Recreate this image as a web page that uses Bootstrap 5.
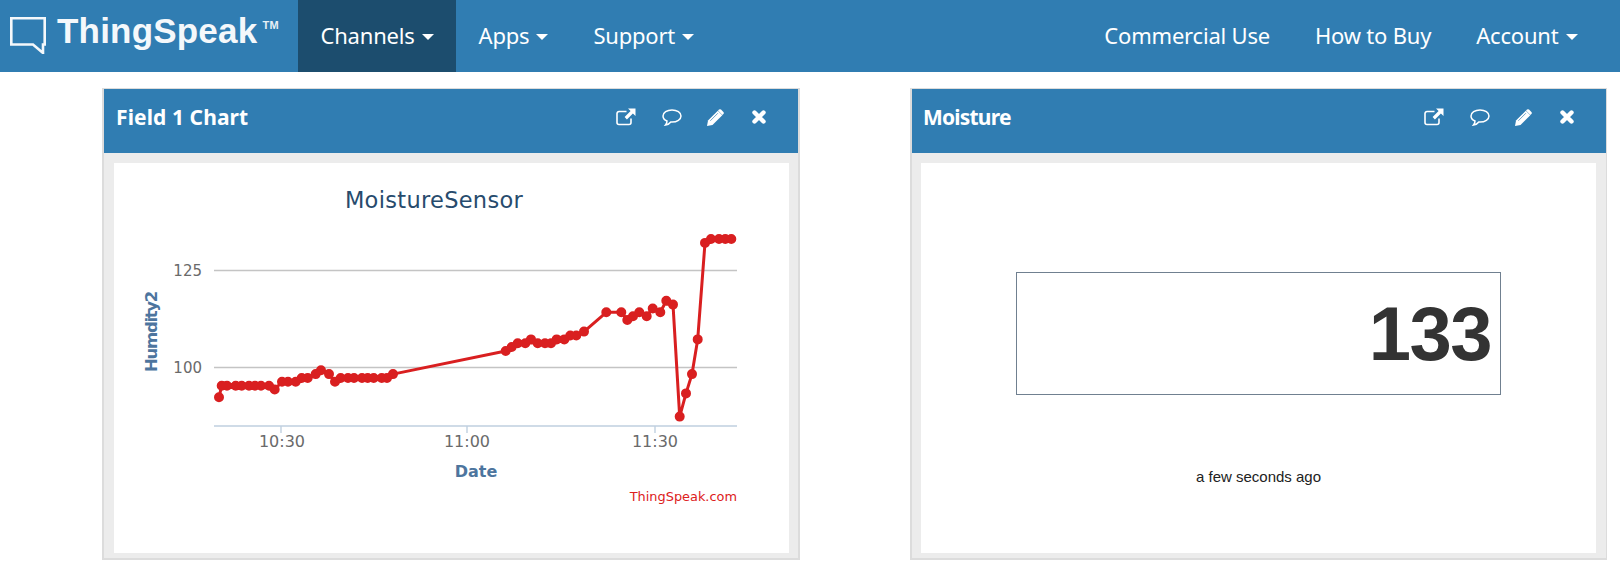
<!DOCTYPE html>
<html lang="en">
<head>
<meta charset="utf-8">
<title>ThingSpeak</title>
<link href="https://cdn.jsdelivr.net/npm/bootstrap@5.3.0/dist/css/bootstrap.min.css" rel="stylesheet">
<style>
body{background:#fff;overflow:hidden}
.ts-bar{background:#307db2;height:72px;padding:0 20px 0 0;align-items:stretch;flex-wrap:nowrap;justify-content:flex-start}
.ts-brand{display:flex;align-items:flex-start;width:298px;color:#fff;margin:0;padding:0;text-decoration:none}
.ts-brand svg{margin:17px 0 0 10px;flex:none}
.ts-word{font:700 35px/1 "Liberation Sans",Arial,sans-serif;letter-spacing:.2px;margin:13px 0 0 10px;color:#f4f8fb}
.ts-tm{font:700 11px/1 "Liberation Sans",Arial,sans-serif;margin:20px 0 0 5px;letter-spacing:.5px;color:#e8f0f6}
.ts-nav{flex-direction:row;height:72px}
.ts-nav .nav-link{color:#fff;font:400 22px/1 "Noto Sans",sans-serif;height:72px;padding:0 22.500px 2px;display:flex;align-items:center;letter-spacing:-.2px}
.ts-nav .nav-link.active{background:#1c4d6e;color:#fff}
.ts-nav .dropdown-toggle::after{border-top:6px solid;border-left:6.200px solid transparent;border-right:6.200px solid transparent;border-bottom:0;margin:4px 0 0 7px;vertical-align:0}
.ts-board{display:grid;grid-template-columns:698px 697px;column-gap:110px;padding:16px 0 0 102px}
.ts-panel{border:2px solid #dcdcdc;border-top-width:1px;border-radius:0;background:#ececec;height:472px}
.ts-panel.ts-narrow{border-right-width:1px}
.ts-head{background:#307db2;border:0;border-radius:0!important;height:64px;display:flex;align-items:center;justify-content:space-between;padding:0 13px 8px 12px;color:#fff}
.ts-head h2{font:700 21px/1 "Noto Sans",sans-serif;margin:0;letter-spacing:.1px}
.ts-narrow .ts-head{padding-left:11px}
.ts-narrow .ts-head h2{letter-spacing:-.8px}
.ts-tools{display:flex;align-items:center;width:169px;height:20px}
.ts-tools svg{flex:none;display:block}
.ts-tool1{margin-right:26px}.ts-tool2{margin-right:25px}.ts-tool3{margin-right:28px}
.ts-sheet{background:#fff;width:675px;height:390px;margin:10px 0 0 10px}
.ts-narrow .ts-sheet{margin-left:9px}
.ts-sheet svg{display:block}
.ts-box{width:485px;height:123px;border:1px solid #708090;margin:109px 0 0 95px;display:flex;align-items:center;justify-content:flex-end;padding:0 9px 0 0;color:#333;font:700 76px/1 "Liberation Sans",Arial,sans-serif;letter-spacing:-1.500px}
.ts-when{font:400 15px/1 "Liberation Sans",Arial,sans-serif;color:#222;text-align:center;margin:74px 0 0 0}
.ts-title{font:22.500px "DejaVu Sans",sans-serif;fill:#274b6d;letter-spacing:.3px}
.ts-lab{font:15px "DejaVu Sans",sans-serif;fill:#6a6a6a}
.ts-lab-x{font-size:16px}
.ts-axt{font:700 16px "DejaVu Sans",sans-serif;fill:#4d759e}
.ts-axt-y{font-size:16.500px;letter-spacing:-1.300px}
.ts-cred{font:12.900px "DejaVu Sans",sans-serif;fill:#dd2020}
</style>
</head>
<body>
<nav class="navbar ts-bar">
  <a class="ts-brand" href="#">
    <svg width="37" height="37" viewBox="0 0 37 37" fill="none" stroke="#f4f8fb" stroke-width="2.6"><path d="M1.300 1.300H34.700V27.500H33V36L23 27.500H1.300Z"/></svg>
    <span class="ts-word">ThingSpeak</span><span class="ts-tm">TM</span>
  </a>
  <ul class="navbar-nav ts-nav me-auto">
    <li class="nav-item"><a class="nav-link dropdown-toggle active" href="#">Channels</a></li>
    <li class="nav-item"><a class="nav-link dropdown-toggle" href="#">Apps</a></li>
    <li class="nav-item"><a class="nav-link dropdown-toggle" href="#">Support</a></li>
  </ul>
  <ul class="navbar-nav ts-nav">
    <li class="nav-item"><a class="nav-link" href="#">Commercial Use</a></li>
    <li class="nav-item"><a class="nav-link" href="#">How to Buy</a></li>
    <li class="nav-item"><a class="nav-link dropdown-toggle" href="#">Account</a></li>
  </ul>
</nav>
<main class="ts-board">
  <section class="card ts-panel">
    <header class="card-header ts-head">
      <h2>Field 1 Chart</h2>
      <div class="ts-tools">
        <svg class="ts-tool1" width="20" height="18" viewBox="0 0 20 18"><path d="M15 10.500v4a2 2 0 0 1-2 2H3a2 2 0 0 1-2-2V5.500a2 2 0 0 1 2-2h7.500" fill="none" stroke="#fff" stroke-width="1.600"/><path d="M12 .5h7.500V8l-2.600-2.600-6 6-2.300-2.300 6-6z" fill="#fff"/></svg>
        <svg class="ts-tool2" width="20" height="17" viewBox="0 0 20 17"><path d="M10 1C5 1 1 3.600 1 7c0 2.200 1.500 4 4 5 0 1.500-.5 2.800-1.500 4 2.400-.3 4.200-1.500 5.300-3h1.200c5 0 9-2.600 9-6s-4-6-9-6z" fill="none" stroke="#fff" stroke-width="1.500"/></svg>
        <svg class="ts-tool3" width="17" height="17" viewBox="0 0 17 17"><path d="M1 11.500 10.800 1.700l4.500 4.500L5.500 16 0 17z" fill="#fff"/><path d="M3.300 11.800l7.600-7.600" stroke="#307db2" stroke-width=".7"/><path d="M12 .6a1.500 1.500 0 0 1 2 0l2.400 2.400a1.500 1.500 0 0 1 0 2l-1 1L11 1.600z" fill="#fff"/></svg>
        <svg width="14" height="14" viewBox="0 0 14 14"><path d="M2.500 2.500l9 9M11.500 2.500l-9 9" stroke="#fff" stroke-width="4.400" stroke-linecap="round"/></svg>
      </div>
    </header>
    <div class="ts-sheet">
      <svg width="675" height="390" viewBox="114 163 675 390">
        <text class="ts-title" x="434" y="208" text-anchor="middle">MoistureSensor</text>
        <path d="M214 270.500H737M214 367.500H737" stroke="#c4c4c4" stroke-width="1.600"/>
        <path d="M214 426H737M281 426v7M467 426v7M655 426v7" stroke="#c0d0e0" stroke-width="1.400" fill="none"/>
        <text class="ts-lab" x="202" y="276" text-anchor="end">125</text>
        <text class="ts-lab" x="202" y="373" text-anchor="end">100</text>
        <text class="ts-lab ts-lab-x" x="282" y="447" text-anchor="middle">10:30</text>
        <text class="ts-lab ts-lab-x" x="467" y="447" text-anchor="middle">11:00</text>
        <text class="ts-lab ts-lab-x" x="655" y="447" text-anchor="middle">11:30</text>
        <text class="ts-axt" x="476" y="477" text-anchor="middle">Date</text>
        <text class="ts-axt ts-axt-y" transform="translate(156.500 332) rotate(-90)" text-anchor="middle">Humdity2</text>
        <text class="ts-cred" x="737" y="501" text-anchor="end">ThingSpeak.com</text>
        <g fill="none" stroke="#d91f20" stroke-linejoin="round" stroke-linecap="round">
          <path stroke-width="3" d="M219 397.300 221.700 385.700H269L274.700 389.500 282 381.800H295.700L301.700 378H307.700L315.700 374.100 321 370.200 329 374.100 335 381.800 340.700 378H387L393 374.100 505.700 351 511.700 347 517.700 343.200H525.300L531 339.400 537.700 343.200H551L556.700 339.400H564.300L570.300 335.500H576.300L584 331.600 606.300 312.300H621.300L627.300 320 633 316.200 639.300 312.300 646.700 316.200 652.700 308.500 660.300 312.300 666.300 300.800 673 304.600 679.700 416.600 686 393.400 692 374.100 697.700 339.400 705 242.900 711 239H731.300"/>
          <path stroke-width="10" d="M219 397.300h0M221.700 385.700h0M227 385.700h0M235.700 385.700h0M241.700 385.700h0M249 385.700h0M255 385.700h0M261 385.700h0M269 385.700h0M274.700 389.500h0M282 381.800h0M288 381.800h0M295.700 381.800h0M301.700 378h0M307.700 378h0M315.700 374.100h0M321 370.200h0M329 374.100h0M335 381.800h0M340.700 378h0M348 378h0M354 378h0M362 378h0M367.700 378h0M373.700 378h0M381.700 378h0M387 378h0M393 374.100h0M505.700 351h0M511.700 347h0M517.700 343.200h0M525.300 343.200h0M531 339.400h0M537.700 343.200h0M545 343.200h0M551 343.200h0M556.700 339.400h0M564.300 339.400h0M570.300 335.500h0M576.300 335.500h0M584 331.600h0M606.300 312.300h0M621.300 312.300h0M627.300 320h0M633 316.200h0M639.300 312.300h0M646.700 316.200h0M652.700 308.500h0M660.300 312.300h0M666.300 300.800h0M673 304.600h0M679.700 416.600h0M686 393.400h0M692 374.100h0M697.700 339.400h0M705 242.900h0M711 239h0M719 239h0M725.300 239h0M731.300 239h0"/>
        </g>
      </svg>
    </div>
  </section>
  <section class="card ts-panel ts-narrow">
    <header class="card-header ts-head">
      <h2>Moisture</h2>
      <div class="ts-tools">
        <svg class="ts-tool1" width="20" height="18" viewBox="0 0 20 18"><path d="M15 10.500v4a2 2 0 0 1-2 2H3a2 2 0 0 1-2-2V5.500a2 2 0 0 1 2-2h7.500" fill="none" stroke="#fff" stroke-width="1.600"/><path d="M12 .5h7.500V8l-2.600-2.600-6 6-2.300-2.300 6-6z" fill="#fff"/></svg>
        <svg class="ts-tool2" width="20" height="17" viewBox="0 0 20 17"><path d="M10 1C5 1 1 3.600 1 7c0 2.200 1.500 4 4 5 0 1.500-.5 2.800-1.500 4 2.400-.3 4.200-1.500 5.300-3h1.200c5 0 9-2.600 9-6s-4-6-9-6z" fill="none" stroke="#fff" stroke-width="1.500"/></svg>
        <svg class="ts-tool3" width="17" height="17" viewBox="0 0 17 17"><path d="M1 11.500 10.800 1.700l4.500 4.500L5.500 16 0 17z" fill="#fff"/><path d="M3.300 11.800l7.600-7.600" stroke="#307db2" stroke-width=".7"/><path d="M12 .6a1.500 1.500 0 0 1 2 0l2.400 2.400a1.500 1.500 0 0 1 0 2l-1 1L11 1.600z" fill="#fff"/></svg>
        <svg width="14" height="14" viewBox="0 0 14 14"><path d="M2.500 2.500l9 9M11.500 2.500l-9 9" stroke="#fff" stroke-width="4.400" stroke-linecap="round"/></svg>
      </div>
    </header>
    <div class="ts-sheet">
      <div class="ts-box">133</div>
      <p class="ts-when">a few seconds ago</p>
    </div>
  </section>
</main>
<script src="https://cdn.jsdelivr.net/npm/bootstrap@5.3.0/dist/js/bootstrap.bundle.min.js"></script>
</body>
</html>
